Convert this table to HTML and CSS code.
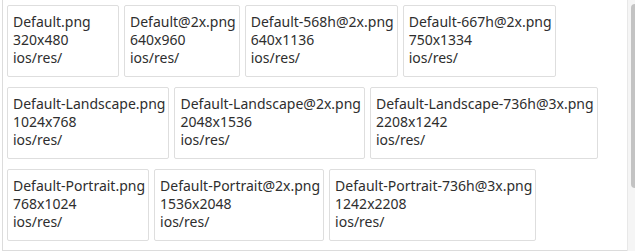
FILE: index.html
```html
<!DOCTYPE html>
<html>
<head>
<meta charset="utf-8">
<link rel="stylesheet" href="styles.css">
</head>
<body>
<div class="frame">
  <div class="panel">
    <div class="card"><div>Default.png</div><div>320x480</div><div>ios/res/</div></div>
    <div class="card"><div>Default@2x.png</div><div>640x960</div><div>ios/res/</div></div>
    <div class="card"><div>Default-568h@2x.png</div><div>640x1136</div><div>ios/res/</div></div>
    <div class="card"><div>Default-667h@2x.png</div><div>750x1334</div><div>ios/res/</div></div>
    <div class="card"><div>Default-Landscape.png</div><div>1024x768</div><div>ios/res/</div></div>
    <div class="card"><div>Default-Landscape@2x.png</div><div>2048x1536</div><div>ios/res/</div></div>
    <div class="card"><div>Default-Landscape-736h@3x.png</div><div>2208x1242</div><div>ios/res/</div></div>
    <div class="card"><div>Default-Portrait.png</div><div>768x1024</div><div>ios/res/</div></div>
    <div class="card"><div>Default-Portrait@2x.png</div><div>1536x2048</div><div>ios/res/</div></div>
    <div class="card"><div>Default-Portrait-736h@3x.png</div><div>1242x2208</div><div>ios/res/</div></div>
  </div>
  <div class="scrollbar"><div class="thumb"></div></div>
</div>
</body>
</html>
```
FILE: styles.css
```css
html, body {
  margin: 0;
  padding: 0;
  background: #ffffff;
}
body {
  font-family: "Noto Sans", "Open Sans", sans-serif;
  font-size: 14px;
  line-height: 18px;
  color: #2e2e2e;
}
.frame {
  display: flex;
  height: 252px;
  padding-left: 2px;
  box-sizing: border-box;
}
.panel {
  flex: 1;
  height: 251px;
  box-sizing: border-box;
  border-left: 1px solid #dcdcdc;
  border-bottom: 1px solid #dcdcdc;
  padding: 5px 0 9px 4px;
  display: flex;
  flex-wrap: wrap;
  align-content: flex-start;
  gap: 10px 5px;
  overflow: hidden;
}
.card {
  border: 1px solid #dedede;
  border-radius: 2px;
  padding: 7px 3px 9px 5px;
  min-width: 102px;
  white-space: nowrap;
}
.scrollbar {
  width: 8px;
  height: 251px;
  box-sizing: border-box;
  border-left: 1px solid #e8e8e8;
  background: #f5f5f5;
  padding: 4px 0 0 3px;
}
.thumb {
  height: 184px;
  background: #c3c3c3;
  border-radius: 4px 0 0 4px;
}
```
